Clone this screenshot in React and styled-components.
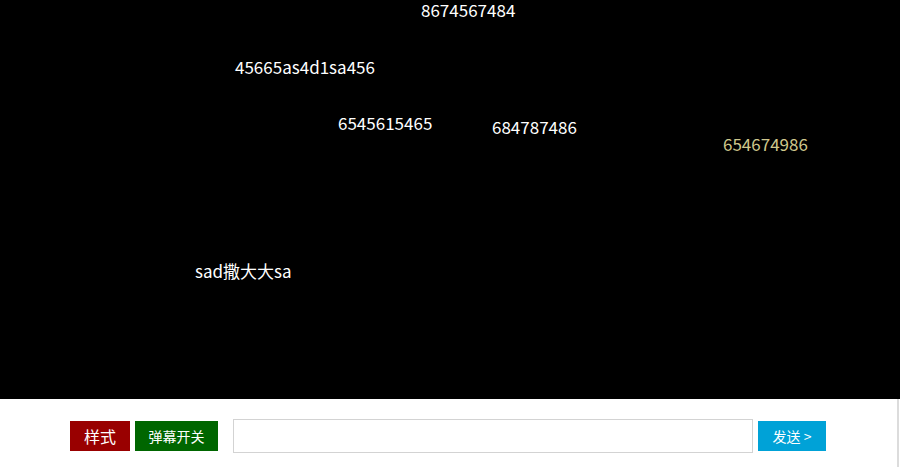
import React from 'react'
import styled, { createGlobalStyle } from 'styled-components'

const GlobalStyle = createGlobalStyle`
  html, body {
    margin: 0;
    padding: 0;
    background: #fff;
    font-family: "Noto Sans CJK SC", "Microsoft YaHei", sans-serif;
  }
`

const Wrapper = styled.div`
  width: 900px;
  height: 467px;
  display: flex;
  flex-direction: column;
  overflow: hidden;
`

const Stage = styled.div`
  position: relative;
  height: 399px;
  background: #000;
  overflow: hidden;
`

const Bullet = styled.span`
  position: absolute;
  white-space: nowrap;
  font-size: 17px;
  line-height: 20px;
  color: ${p => p.color || '#fff'};
`

const Bar = styled.div`
  flex: 1;
  width: 899px;
  box-sizing: border-box;
  border-right: 2px solid #dcdcdc;
  display: flex;
  align-items: center;
  padding: 6px 0 0 70px;
`

const Btn = styled.button`
  height: 30px;
  border: none;
  margin: 0;
  padding: 0;
  width: ${p => p.w}px;
  margin-right: ${p => p.gap || 0}px;
  background: ${p => p.bg};
  color: #fff;
  font-family: "Noto Sans CJK SC", sans-serif;
  font-size: ${p => p.size || 14}px;
  cursor: pointer;
`

const Input = styled.input`
  width: 520px;
  height: 34px;
  box-sizing: border-box;
  border: 1px solid #d3d3d3;
  margin: 0 5px 0 0;
  padding: 0 8px;
  outline: none;
`

const bullets = [
  { text: '8674567484', x: 421, y: 0 },
  { text: '45665as4d1sa456', x: 235, y: 57 },
  { text: '6545615465', x: 338, y: 113 },
  { text: '684787486', x: 492, y: 117 },
  { text: '654674986', x: 723, y: 134, color: '#cfc78c' },
  { text: 'sad撒大大sa', x: 195, y: 261 },
]

export default function App() {
  return (
    <Wrapper>
      <GlobalStyle />
      <Stage>
        {bullets.map(b => (
          <Bullet key={b.text} color={b.color} style={{ left: b.x, top: b.y }}>
            {b.text}
          </Bullet>
        ))}
      </Stage>
      <Bar>
        <Btn w={60} gap={5} bg="#990000" size={16}>样式</Btn>
        <Btn w={83} gap={15} bg="#006600">弹幕开关</Btn>
        <Input type="text" />
        <Btn w={68} bg="#00a2d7">发送 &gt;</Btn>
      </Bar>
    </Wrapper>
  )
}
